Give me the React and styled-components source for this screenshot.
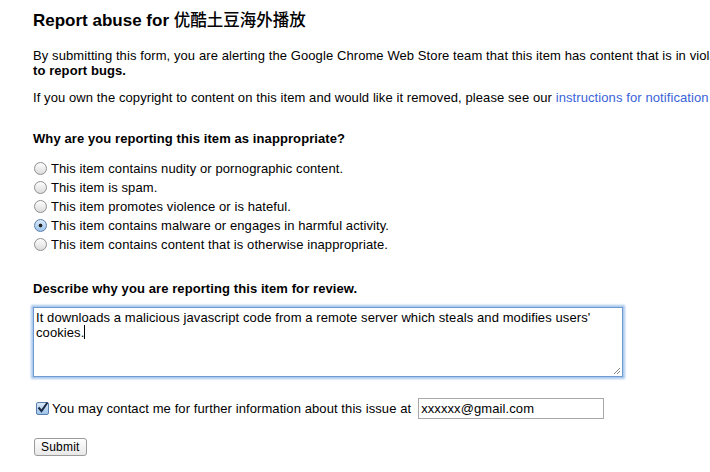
import React from 'react';
import styled, { createGlobalStyle } from 'styled-components';

const Global = createGlobalStyle`
  html, body {
    margin: 0;
    padding: 0;
    background: #fff;
    overflow: hidden;
  }
  body {
    font-family: "Liberation Sans", Arial, sans-serif;
    font-size: 13px;
    letter-spacing: 0.09px;
    color: #000;
  }
`;

const Page = styled.div`
  width: 1000px;
  padding: 9px 0 0 33px;
`;

const Title = styled.h1`
  margin: 0;
  font-size: 17px;
  font-weight: bold;
  line-height: 20px;
  letter-spacing: 0;
`;

const Cjk = styled.span`
  font-family: "Noto Sans CJK SC", sans-serif;
  font-weight: 500;
  font-size: 16.5px;
`;

const Para = styled.p`
  margin: ${p => p.top}px 0 0;
  line-height: 15px;
  white-space: nowrap;
`;

const Link = styled.a`
  color: #3a63d8;
  text-decoration: none;
`;

const Heading = styled.div`
  font-weight: bold;
  margin-top: ${p => p.top}px;
  line-height: 15px;
`;

const Options = styled.div`
  margin-top: 15px;
  display: flex;
  flex-direction: column;
  gap: 4px;
`;

const Option = styled.label`
  display: flex;
  align-items: center;
  height: 15px;
  line-height: 15px;
  margin-left: 1px;
`;

const Radio = styled.span`
  width: 13px;
  height: 13px;
  box-sizing: border-box;
  border-radius: 50%;
  border: 1px solid ${p => (p.checked ? '#5a7fae' : '#8e8e8e')};
  background: ${p =>
    p.checked
      ? 'radial-gradient(circle at 50% 50%, #222 0 1.6px, transparent 2.2px), linear-gradient(#dbe9f8, #9cc3ea)'
      : 'linear-gradient(#fdfdfd, #dcdcdc)'};
  margin-right: 4px;
  flex: none;
`;

const TextArea = styled.div`
  margin-top: 11px;
  width: 590px;
  height: 70px;
  box-sizing: border-box;
  border: 1px solid #6e9bd2;
  box-shadow: 0 0 2px 2px #a9c7ec;
  padding: 2px 2px;
  line-height: 15px;
  position: relative;
  white-space: normal;
`;

const Caret = styled.span`
  display: inline-block;
  width: 1px;
  height: 14px;
  background: #000;
  vertical-align: -2px;
`;

const Grip = styled.svg`
  position: absolute;
  right: 1px;
  bottom: 1px;
`;

const ContactRow = styled.div`
  margin-top: 20px;
  display: flex;
  align-items: center;
  height: 22px;
`;

const Check = styled.span`
  width: 13px;
  height: 13px;
  box-sizing: border-box;
  border: 1px solid #5a7fae;
  border-radius: 2px;
  background: linear-gradient(#dbe9f8, #9cc3ea);
  margin: 0 3px 0 3px;
  position: relative;
  flex: none;
`;

const Email = styled.div`
  margin-left: 7px;
  width: 186px;
  height: 21px;
  box-sizing: border-box;
  border: 1px solid #a8a8a8;
  padding: 2px 2px;
  line-height: 15px;
`;

const Button = styled.button`
  margin-top: 19px;
  margin-left: 1px;
  font-family: "Liberation Sans", Arial, sans-serif;
  font-size: 12px;
  letter-spacing: 0.2px;
  height: 18px;
  padding: 0 6px;
  border: 1px solid #9a9a9a;
  border-radius: 3px;
  background: linear-gradient(#fff, #e8e8e8);
  color: #000;
  line-height: 14px;
`;

const options = [
  'This item contains nudity or pornographic content.',
  'This item is spam.',
  'This item promotes violence or is hateful.',
  'This item contains malware or engages in harmful activity.',
  'This item contains content that is otherwise inappropriate.',
];

export default function App() {
  return (
    <>
      <Global />
      <Page>
        <Title>
          Report abuse for <Cjk>优酷土豆海外播放</Cjk>
        </Title>
        <Para top={17}>
          By submitting this form, you are alerting the Google Chrome Web Store team that this item has content that is in violation of our policies. Please don't use this form
          <br />
          <b>to report bugs.</b>
        </Para>
        <Para top={12}>
          If you own the copyright to content on this item and would like it removed, please see our <Link href="#">instructions for notification</Link>
        </Para>
        <Heading top={26}>Why are you reporting this item as inappropriate?</Heading>
        <Options>
          {options.map((o, i) => (
            <Option key={i}>
              <Radio checked={i === 3} />
              {o}
            </Option>
          ))}
        </Options>
        <Heading top={29}>Describe why you are reporting this item for review.</Heading>
        <TextArea>
          It downloads a malicious javascript code from a remote server which steals and modifies users'
          cookies.<Caret />
          <Grip width="8" height="8" viewBox="0 0 8 8">
            <path d="M7 1 L1 7 M7 4 L4 7" stroke="#888" strokeWidth="1" />
          </Grip>
        </TextArea>
        <ContactRow>
          <Check>
            <svg width="13" height="13" viewBox="0 0 13 13" style={{ position: 'absolute', left: -1, top: -2 }}>
              <path d="M2.5 6.5 L5.5 10 L11.5 1.5" fill="none" stroke="#1d2a44" strokeWidth="2" />
            </svg>
          </Check>
          You may contact me for further information about this issue at
          <Email>xxxxxx@gmail.com</Email>
        </ContactRow>
        <Button>Submit</Button>
      </Page>
    </>
  );
}
